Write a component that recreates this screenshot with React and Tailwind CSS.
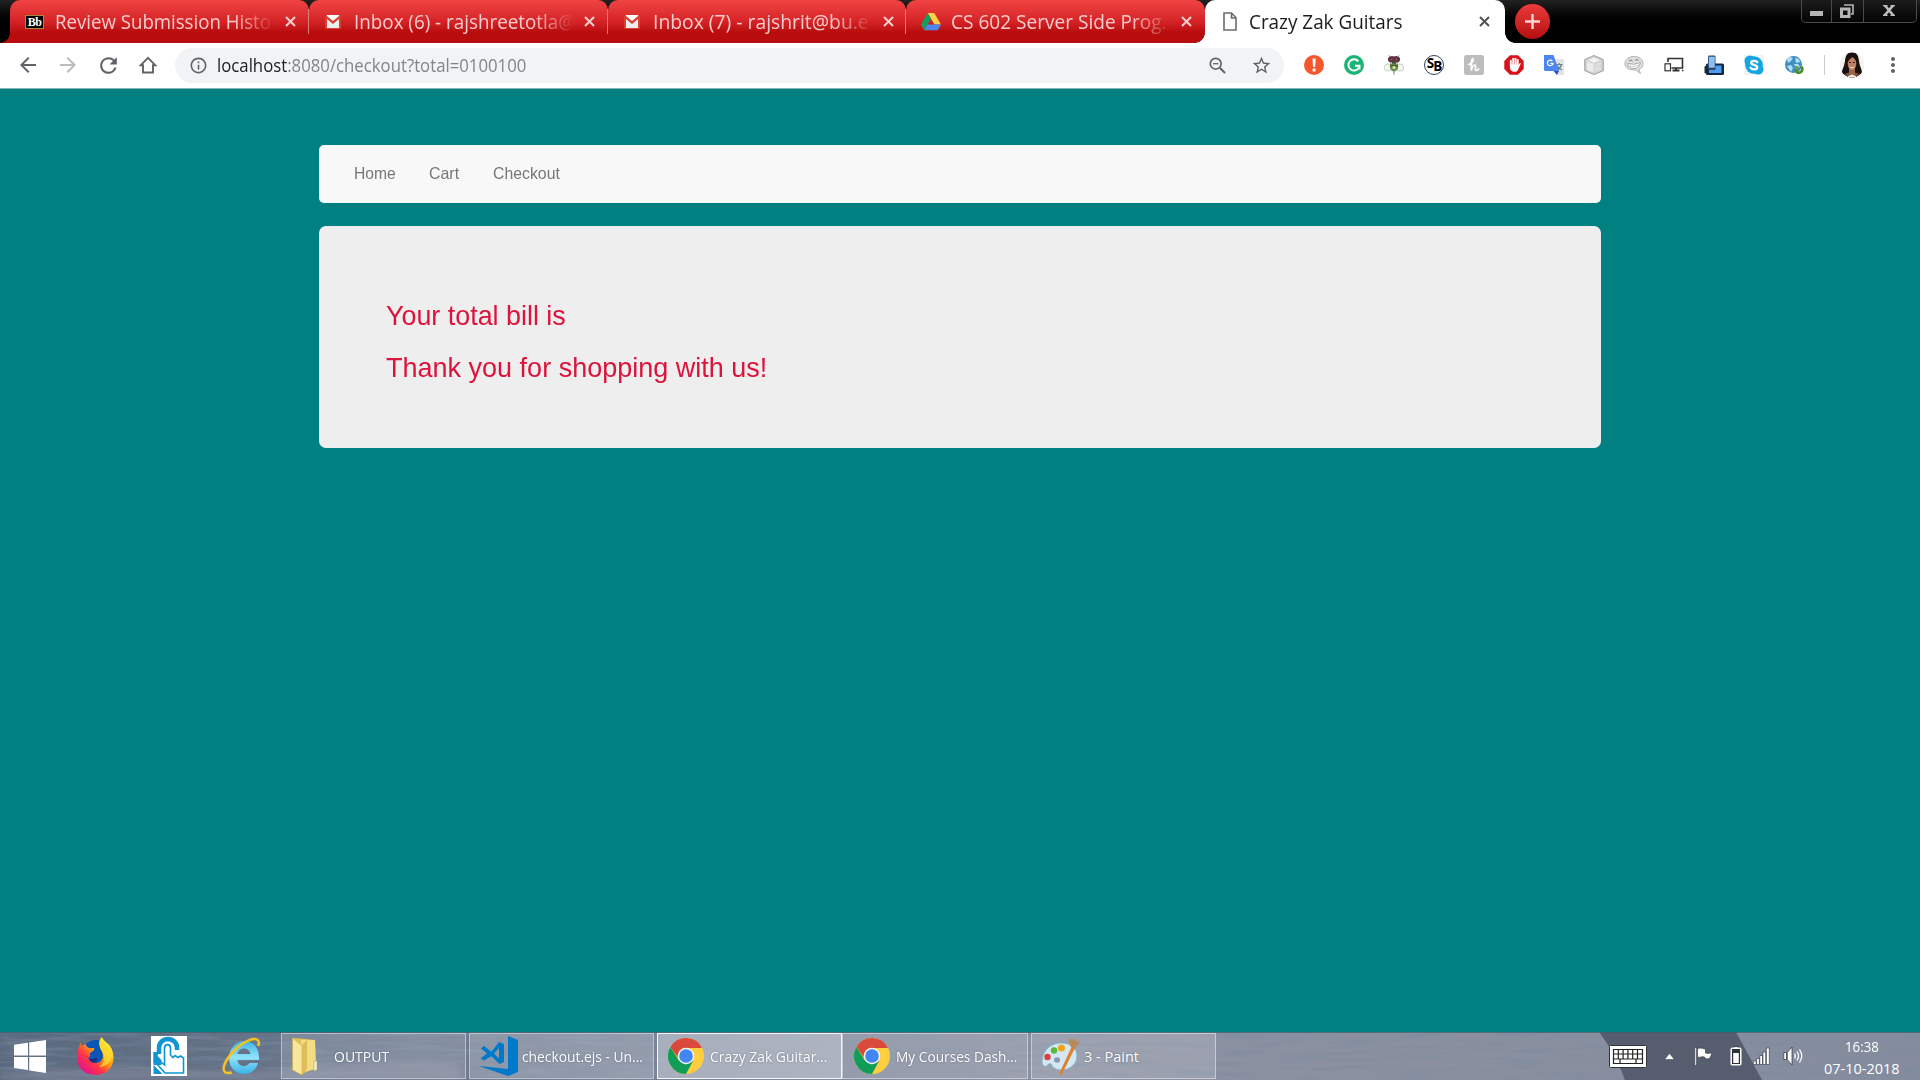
import { useLayoutEffect, useRef, useState } from "react";
import {
  MdArrowBack,
  MdArrowForward,
  MdRefresh,
  MdInfoOutline,
  MdStarBorder,
  MdZoomOut,
  MdMoreVert,
} from "react-icons/md";

/* A single line of text condensed or expanded to an exact width. */
function Fit({ w, className = "", children }) {
  const ref = useRef(null);
  const [scale, setScale] = useState(1);
  useLayoutEffect(() => {
    const natural = ref.current.offsetWidth;
    if (natural) setScale(w / natural);
  }, [w]);
  return (
    <span className="block shrink-0" style={{ width: w }}>
      <span
        ref={ref}
        className={`inline-block origin-left whitespace-nowrap ${className}`}
        style={{ transform: `scaleX(${scale})` }}
      >
        {children}
      </span>
    </span>
  );
}

function Cross({ className }) {
  return (
    <svg width="11" height="11" viewBox="0 0 11 11" className={className}>
      <path d="M1 1l9 9M10 1l-9 9" stroke="currentColor" strokeWidth="2" fill="none" />
    </svg>
  );
}

function BbIcon() {
  return (
    <span className="flex h-[14px] w-[19px] items-center justify-center border border-[#a5883c] bg-black font-['Liberation_Serif',serif] text-[12px] leading-none font-bold tracking-[-0.5px] text-white">
      Bb
    </span>
  );
}

function GmailIcon() {
  return (
    <svg width="18" height="16" viewBox="0 0 18 16">
      <rect x="1" y="1" width="16" height="14" rx="1" fill="#d9402f" />
      <path d="M3 1h12v1L9 7 3 2z" fill="#fff" />
      <path d="M3 5l6 5 6-5v9H3z" fill="#eee" />
    </svg>
  );
}

function DriveIcon() {
  return (
    <svg width="20" height="18" viewBox="0 0 20 18">
      <path d="M6.7 0h6.6L20 11.5h-6.6z" fill="#ffcf48" />
      <path d="M6.7 0L10 5.8 3.3 17.3 0 11.5z" fill="#11a05e" />
      <path d="M6.6 11.5H20l-3.3 5.8H3.3z" fill="#4b87ee" />
    </svg>
  );
}

function FileIcon() {
  return (
    <svg width="14" height="19" viewBox="0 0 14 19" fill="none" stroke="#6c6c6c" strokeWidth="1.6">
      <path d="M1 1h7.500L13 5.700V18H1z" />
      <path d="M8.500 1v5H13" />
    </svg>
  );
}

const tabs = [
  { icon: <BbIcon />, title: "Review Submission Histo", w: 216 },
  { icon: <GmailIcon />, title: "Inbox (6) - rajshreetotla@", w: 221 },
  { icon: <GmailIcon />, title: "Inbox (7) - rajshrit@bu.e", w: 216 },
  { icon: <DriveIcon />, title: "CS 602 Server Side Prog.", w: 216 },
];

function Tab({ icon, title, w, last }) {
  return (
    <div
      className={`relative flex h-[43px] w-[298.75px] shrink-0 items-center rounded-t-[10px] bg-linear-to-b from-[#f24343] via-[#d42326] via-50% to-[#b80c0d] to-75% ${last ? "rounded-br-[10px]" : ""}`}
    >
      <div className="flex w-[45px] justify-center pl-[4px]">{icon}</div>
      <div className="w-[223px] overflow-hidden mask-r-from-80% mask-r-to-99% text-[19.500px] leading-[30px] text-[#f8cccc]">
        <Fit w={w}>{title}</Fit>
      </div>
      <Cross className="ml-[7px] text-[#f6cfcf]" />
      {!last && <div className="absolute top-[9px] right-0 h-[25px] w-px bg-[#e07a7a]" />}
    </div>
  );
}

function TitleBar() {
  return (
    <div className="flex h-[43px] bg-linear-to-b from-[#222] to-black to-70%">
      <div className="flex w-[10px] items-end">
        <div className="size-[10px] bg-[radial-gradient(circle_at_0_0,transparent_9.500px,#b80c0d_10px)]" />
      </div>
      {tabs.map((t, i) => (
        <Tab key={t.title} {...t} last={i === tabs.length - 1} />
      ))}
      <div className="relative flex h-[43px] w-[300px] items-center rounded-t-[10px] bg-white">
        <div className="absolute bottom-0 -left-[10px] size-[10px] bg-[radial-gradient(circle_at_0_0,transparent_9.500px,#fff_10px)]" />
        <div className="absolute -right-[10px] bottom-0 size-[10px] bg-[radial-gradient(circle_at_100%_0,transparent_9.500px,#fff_10px)]" />
        <div className="flex w-[44px] justify-center pl-[6px]">
          <FileIcon />
        </div>
        <div className="w-[218px] text-[19.500px] leading-[30px] text-[#1c1c1c]">
          <Fit w={153}>Crazy Zak Guitars</Fit>
        </div>
        <Cross className="ml-[12px] text-[#4f5256]" />
      </div>
      <div className="mt-[3.500px] ml-[10px] flex size-[35px] items-center justify-center rounded-full bg-linear-to-b from-[#ec3a3b] to-[#b50b0d]">
        <svg width="15" height="15" viewBox="0 0 15 15">
          <path d="M7.500 0v15M0 7.500h15" stroke="#fbd5d5" strokeWidth="2.400" />
        </svg>
      </div>
      <div className="mr-[3px] ml-auto flex h-[23px] w-[116px] rounded-b-[5px] border border-t-0 border-[#4a4a4a] bg-linear-to-b from-[#1c1c1c] to-[#050505]">
        <div className="flex w-[30px] justify-center border-r border-[#4a4a4a] pt-[11px]">
          <div className="h-[4.500px] w-[13px] bg-[#b5b5b5]" />
        </div>
        <div className="flex w-[32px] justify-center border-r border-[#4a4a4a] pt-[4px] pr-[2px]">
          <svg width="14" height="14" viewBox="0 0 14 14" fill="none" stroke="#b5b5b5">
            <path d="M4 1h9v9h-2" strokeWidth="1.600" />
            <rect x="1.500" y="5" width="7.500" height="7.500" strokeWidth="3" />
          </svg>
        </div>
        <div className="flex flex-1 justify-center pt-[5px] pr-[3px]">
          <svg width="12" height="11" viewBox="0 0 12 11">
            <path d="M1.500 0l9 10.500M10.500 0l-9 10.500" stroke="#bdbdbd" strokeWidth="2.600" />
            <path d="M0 .7h4.500M7.500.7H12M0 10.300h4.500M7.500 10.300H12" stroke="#bdbdbd" strokeWidth="1.200" />
          </svg>
        </div>
      </div>
    </div>
  );
}

const svg20 = { width: 20, height: 20, viewBox: "0 0 20 20" };

const extensions = [
  <svg {...svg20}>
    <circle cx="10" cy="10" r="10" fill="#f4572b" />
    <path d="M8.500 3.500h3.200l-.5 8.500H9z" fill="#fff" />
    <circle cx="10.100" cy="15" r="1.700" fill="#fff" />
  </svg>,
  <svg {...svg20}>
    <circle cx="10" cy="10" r="10" fill="#1cb476" />
    <path d="M14.300 6.300A5.600 5.600 0 1 0 15 12.500" fill="none" stroke="#fff" strokeWidth="1.900" />
    <path d="M11 10.700h4.500v3.800" fill="none" stroke="#fff" strokeWidth="1.900" />
  </svg>,
  <svg {...svg20}>
    <ellipse cx="4" cy="12.500" rx="3.800" ry="3.600" fill="#f3f5ee" stroke="#c3c7ba" strokeWidth=".8" />
    <ellipse cx="16" cy="12.500" rx="3.800" ry="3.600" fill="#f3f5ee" stroke="#c3c7ba" strokeWidth=".8" />
    <path d="M6 3L5 0M14 3l1-3" stroke="#999" strokeWidth=".8" />
    <path d="M4 3q3-3 6-1.500Q13 0 16 3q.5 3-2 4.500H6Q3.500 6 4 3z" fill="#5e2f42" />
    <path d="M6.500 3.500h2v2h-2zM11.500 3.500h2v2h-2z" fill="#93485c" />
    <path d="M8 6h4v3H8z" fill="#3e4a3a" />
    <path d="M6 8.500h8v5q-1.500 3-4 3t-4-3z" fill="#6f8e4b" />
    <path d="M6 11.500q4-2.500 8 0" stroke="#3d5230" strokeWidth="1.200" fill="none" />
    <circle cx="10" cy="12.500" r="1.500" fill="#dbe6a8" />
    <path d="M9 16h2.200l-.6 4H9.600z" fill="#a9b0b0" />
  </svg>,
  <span className="flex size-[20px] items-center justify-center rounded-full border border-[#32435f] bg-white text-[13.500px] leading-none font-bold tracking-[-1px] text-black">
    <span className="-mt-[3px]">S</span>
    <span className="mt-[3px]">B</span>
  </span>,
  <svg {...svg20}>
    <rect width="20" height="20" rx="2.500" fill="#bdbdbd" />
    <path
      d="M5 9.500c3.500-1.500 5-4.500 4-5.800C7.700 3.100 7.200 8 7.300 15.500c.7-3.300 1.900-5.300 3.400-5.500 2.400.1-.8 5.500 1.700 5.500 1 0 1.800-.8 2.300-1.700"
      fill="none"
      stroke="#fff"
      strokeWidth="1.700"
      strokeLinecap="round"
    />
  </svg>,
  <svg {...svg20}>
    <path d="M6 .3h8L19.700 6v8L14 19.700H6L.3 14V6z" fill="#d8121b" />
    <path
      d="M6.800 11V5.800M9.200 10V3.600M11.500 10V3.600M13.700 11V5"
      stroke="#fff"
      strokeWidth="1.900"
      strokeLinecap="round"
    />
    <path d="M5.900 9.500h8.800l1-1.200c.7-.5 1.200 0 .9.800l-2.400 5.300c-.7 1.700-1.600 2.300-3.700 2.300-3 0-4.600-1.700-4.600-4.500z" fill="#fff" />
  </svg>,
  <svg {...svg20}>
    <path d="M9 4h11v16h-6z" fill="#e2e4e8" />
    <path d="M12 9.500h6.500M15.200 8v1.500M17.500 9.500q-1 4-4.500 5.500M13.500 10.500q1.500 3.500 4.500 4.500" stroke="#6d7b8a" strokeWidth="1.100" fill="none" />
    <path d="M0 0h9.500l5.500 16H1.500Q0 16 0 14.500z" fill="#4a86ee" />
    <path d="M9.500 16H15l-2 4z" fill="#2a54b5" />
    <path d="M8.300 6A2.800 2.800 0 1 0 9 8.300H6.500" fill="none" stroke="#fff" strokeWidth="1.300" />
  </svg>,
  <svg {...svg20}>
    <path d="M10 .5l9.300 4v11.200L10 19.600.7 15.700V4.500z" fill="#d0d0d0" stroke="#a3a3a3" />
    <path d="M10 2.500l6 2.700-6 2.600-6-2.600z" fill="#f3f3f3" />
    <path d="M3 6.500L9.500 9v8.500L3 14.800z" fill="#ebebeb" />
    <path d="M10.500 9L17 6.500v8.300l-6.500 2.700z" fill="#dcdcdc" />
  </svg>,
  <svg {...svg20}>
    <path d="M10 1.500c5 0 9 2.800 9 7 0 3-1.500 5-4 6l1.500 4-5-3.500C5 15.200 1 13 1 8.500c0-4.200 4-7 9-7z" fill="#e0e0e0" stroke="#b2b2b2" />
    <path d="M3.500 8.500q7 2 13-1-1 6-6.500 6-5.500 0-6.500-5z" fill="#fff" stroke="#9a9a9a" strokeWidth=".8" />
    <path d="M4 10.800q6 2 11.500-1" stroke="#b5b5b5" strokeWidth=".7" fill="none" />
    <path d="M5 6q2-2 3.500 0M11 5.500q2-2 3.500 0" stroke="#777" fill="none" />
  </svg>,
  <svg {...svg20} fill="none" stroke="#333">
    <path d="M4 7V3.500h14.500V13H7.500" strokeWidth="1.600" />
    <rect x="1" y="8.800" width="5.500" height="7" strokeWidth="1.200" />
    <path d="M12 13v2.500M8.500 15.500h7" strokeWidth="2" />
    <path d="M18 15.500h1.500" strokeWidth="1.500" />
  </svg>,
  <svg {...svg20}>
    <rect x="0.500" y="11" width="5" height="7.500" rx="1" fill="#19293d" />
    <rect x="2" y="8.500" width="18" height="11.500" rx="1.500" fill="#14273f" />
    <rect x="5" y="10.500" width="12.500" height="7.500" fill="#4e9cf2" />
    <rect x="4" y="0.500" width="7.500" height="14.500" rx="1.200" fill="#2b4566" />
    <rect x="4.800" y="1.700" width="6" height="11" fill="#8dbdf2" />
  </svg>,
  <svg {...svg20}>
    <rect x="0" y="0" width="20" height="20" fill="#f0f4f7" />
    <circle cx="10" cy="10" r="8.800" fill="#14a5e3" />
    <circle cx="6" cy="6" r="5.500" fill="#14a5e3" />
    <circle cx="14.200" cy="14.200" r="5.300" fill="#14a5e3" />
    <path
      d="M13.300 7.300C12.600 5.700 7.300 5 7.200 7.700c0 2.700 6 1.500 6 4.500 0 2.800-5.500 2.600-6.600.5"
      fill="none"
      stroke="#fff"
      strokeWidth="2.300"
      strokeLinecap="round"
    />
  </svg>,
  <svg {...svg20}>
    <circle cx="9.500" cy="9.500" r="8.500" fill="#3d8fc6" />
    <path d="M3 4l3-2 3 1-2 3-3 2zM11 3l4 1 1 3-4 1zM3 11l4-1 2 3-2 4zM10 9l4 0 2 3-4 1z" fill="#b5dff2" />
    <path d="M11.500 14.500q1 4 4.500 3 3.500-1.500 1.500-6" fill="none" stroke="#4f8f1f" strokeWidth="2.800" />
    <path d="M10.500 11h4l-2 4z" fill="#65a82c" />
  </svg>,
];

function Toolbar() {
  return (
    <div className="flex h-[46px] items-center border-b border-[#86b4b5] bg-white pb-px pl-2">
      {[
        <MdArrowBack size={24} className="text-[#5f6368]" />,
        <MdArrowForward size={24} className="text-[#babcbe]" />,
        <MdRefresh size={25} className="text-[#5f6368]" />,
        <svg width="18" height="18" viewBox="0 0 18 18" fill="none" stroke="#5f6368" strokeWidth="1.900">
          <path d="M1.800 9.200L9 1.900l7.200 7.300H14v7.300H4V9.200z" />
        </svg>,
      ].map((icon, i) => (
        <div key={i} className="flex w-10 justify-center">
          {icon}
        </div>
      ))}
      <div className="mt-px ml-[7px] flex h-[35px] w-[1109px] items-center rounded-full bg-[#f1f3f4] pb-px pl-[13.500px] text-[#5f6368]">
        <MdInfoOutline size={19} className="mt-px" />
        <div className="ml-[9.500px] text-[18px] leading-[30px] text-[#80868b]">
          <Fit w={309}>
            <span className="text-[#202124]">localhost</span>:8080/checkout?total=0100100
          </Fit>
        </div>
        <svg width="17" height="17" viewBox="0 0 17 17" fill="none" stroke="#5f6368" className="mr-[2px] ml-auto">
          <circle cx="6.700" cy="6.700" r="5.400" strokeWidth="1.700" />
          <path d="M10.800 10.800l5.200 5.200" strokeWidth="2" />
          <path d="M4 6.700h5.400" strokeWidth="1.300" />
        </svg>
        <MdStarBorder size={21} className="mt-px mr-[12.500px] ml-[22.500px]" />
      </div>
      <div className="ml-[10px] flex">
        {extensions.map((icon, i) => (
          <div key={i} className="flex w-10 justify-center">
            {icon}
          </div>
        ))}
      </div>
      <div className="ml-[10px] h-5 w-px bg-[#c8cacc]" />
      <svg width="24" height="26" viewBox="0 0 24 26" className="ml-[15px]">
        <defs>
          <clipPath id="face">
            <circle cx="12" cy="13" r="12.500" />
          </clipPath>
        </defs>
        <g clipPath="url(#face)">
          <rect width="24" height="26" fill="#f5f1ee" />
          <path d="M12 0c5 0 6.500 4 7 9s3 8 3 12-3 5-5 5H6c-3 0-5-2-4.500-5S4.500 14 5 9s2-9 7-9z" fill="#1b1110" />
          <path d="M3 24q4-4 9-4t9 4v3H3z" fill="#7b5040" />
          <path d="M9 17h6v5l-3 2-3-2z" fill="#9b6347" />
          <ellipse cx="12" cy="11.500" rx="4.300" ry="6.800" fill="#bd8264" />
          <path d="M7.500 10q1-6 5-6.500 3.500.5 4.300 6.500-2-3.500-4.300-5-3 2-5 5z" fill="#1b1110" />
          <path d="M9.700 15q2.300 1.800 4.600 0" stroke="#f2d9cc" strokeWidth="1" fill="none" />
          <path d="M9 10.500h2M13 10.500h2" stroke="#3a211b" strokeWidth="1" />
          <path d="M8 24l4-1.500 4 1.500v2H8z" fill="#f0e5de" />
        </g>
      </svg>
      <MdMoreVert size={24} className="ml-[17px] text-[#5f6368]" />
    </div>
  );
}

function Page() {
  return (
    <div className="h-[943px] bg-[#008080] pt-[56px] font-['Liberation_Sans',Arial,sans-serif]">
      <div className="ml-[319px] flex h-[58px] w-[1282px] items-center rounded-[5px] bg-[#f8f8f8] pl-[35px] text-[17px] leading-[24px] text-[#777]">
        <Fit w={41.5}>Home</Fit>
        <div className="ml-[33.500px]">
          <Fit w={30}>Cart</Fit>
        </div>
        <div className="ml-[33.500px]">
          <Fit w={67}>Checkout</Fit>
        </div>
      </div>
      <div className="mt-[23px] ml-[319px] flex h-[222px] w-[1282px] flex-col gap-[20px] rounded-[7px] bg-[#eee] pt-[74px] pl-[67px] text-[28px] leading-[32px] text-[#dc143c]">
        <Fit w={179.5}>Your total bill is</Fit>
        <Fit w={381}>Thank you for shopping with us!</Fit>
      </div>
    </div>
  );
}

function ChromeLogo() {
  return (
    <svg width="36" height="36" viewBox="0 0 36 36">
      <circle cx="18" cy="18" r="18" fill="#ffcd40" />
      <path d="M2.400 9A18 18 0 0 0 18 36l7.300-13.500L18 26.500 10.500 22z" fill="#0f9d58" />
      <path d="M2.400 9A18 18 0 0 1 34 9.900H18a8 8 0 0 0-7.500 5.600L10.200 20z" fill="#d94a3d" />
      <circle cx="18" cy="18" r="8.300" fill="#f1f1f1" />
      <circle cx="18" cy="18" r="6.800" fill="#4285f4" />
    </svg>
  );
}

function VsCodeLogo() {
  return (
    <svg width="39" height="40" viewBox="0 0 39 40">
      <path d="M29 0l10 4v32l-10 4L0 30l29 3z" fill="#0179cb" />
      <path
        fillRule="evenodd"
        d="M2 12.500L5 10l7.500 5.800L20 6l5 2v18l-4.500 2-8-7.800L5 24.500l-3.500-2L8 17.500zM20 12l-5 5.500 5 5z"
        fill="#0179cb"
      />
    </svg>
  );
}

function FolderLogo() {
  return (
    <svg width="26" height="39" viewBox="0 0 26 39">
      <path d="M1 1l13 1 9 1 1 28-14 6z" fill="#e2c25c" />
      <path d="M9 3l14 0 1 29-14 3z" fill="#f3dc83" />
      <path d="M0.500 1L10 8.500V38L0.500 33z" fill="#f7e69c" stroke="#cfab44" strokeWidth=".6" />
      <path d="M10 8l5-5v29l-5 6z" fill="#dfbd59" />
      <path d="M22 24h3v9l-3 1z" fill="#eef0e0" stroke="#b89a45" strokeWidth=".5" />
    </svg>
  );
}

function PaintLogo() {
  return (
    <svg width="39" height="38" viewBox="0 0 39 38">
      <path
        d="M1 25C1 12 12 5 22 6c9 .5 14 6 14 13 0 8-7 14-15 14-6 0-9-2-11-6-2-1-4 1-5 3-3-1-4-3-4-5z"
        fill="#d2e7f3"
        stroke="#86b1cb"
      />
      <ellipse cx="16" cy="23" rx="3" ry="2.800" fill="#8b98ab" />
      <circle cx="6.500" cy="20" r="3.200" fill="#d8423b" />
      <circle cx="13" cy="13.500" r="3.200" fill="#5eb63c" />
      <circle cx="20.500" cy="11" r="3.600" fill="#f0a51f" />
      <path d="M31 9l3 2-13 26-2 1 0-3z" fill="#df812c" />
      <path d="M29 9l5 3 5-8-4 1-1-4-2 2-4-2z" fill="#b98a57" />
    </svg>
  );
}

function FirefoxLogo() {
  return (
    <svg width="37" height="38" viewBox="0 0 37 38">
      <defs>
        <linearGradient id="ffx" x1="0.900" y1="0.100" x2="0.200" y2="0.900">
          <stop offset="0.100" stopColor="#fff13f" />
          <stop offset="0.450" stopColor="#ff980e" />
          <stop offset="0.700" stopColor="#ff3647" />
          <stop offset="1" stopColor="#e31587" />
        </linearGradient>
      </defs>
      <circle cx="19" cy="17" r="14" fill="#0b54b8" />
      <path
        d="M4 5c0 2 0 3 1 4l4-2c0 2 1 3 3 4l5 0c1 2-1 3-4 5 0 2 1 4-2 5 2 5 9 7 13 3 3-3 2-8 0-11-2-5-3-9 1-13 1 4 5 5 8 9 7 10 4 28-14 29C6 38 0 29 0 21 0 15 1 11 4 5z"
        fill="url(#ffx)"
      />
      <path d="M25 0c-4 5-3 9 0 14 4 8 2 13-3 16 8 0 14-7 13-14C34 8 26 6 25 0z" fill="#ffd92e" opacity=".8" />
      <path d="M12 22c3 1 5-2 9 0-2 4-7 5-9 0z" fill="#1b2d7c" />
    </svg>
  );
}

function TouchLogo() {
  return (
    <svg width="36" height="40" viewBox="0 0 36 40">
      <rect width="36" height="40" fill="#fff" />
      <path d="M8 18V11.500A9 8.500 0 0 1 26 11.500V14" fill="none" stroke="#1095d2" strokeWidth="4.500" />
      <path
        d="M13.500 12c0-4.500 6-4.500 6 0v7l2.500 2.500 2-2 3 2 2.500-1.500 3 2v15H14l-8-9c1-3 4-2.500 7.500 1z"
        fill="#fff"
        stroke="#1095d2"
        strokeWidth="1.600"
      />
      <path d="M2.500 16l8 8v5H2.500zM2.500 29l9 9h-9z" fill="#1095d2" />
      <path d="M2.500 16h6l-6 12z" fill="#1095d2" />
    </svg>
  );
}

function IeLogo() {
  return (
    <svg width="38" height="38" viewBox="0 0 38 38">
      <defs>
        <linearGradient id="ie" x1="0" y1="0" x2="0" y2="1">
          <stop offset="0" stopColor="#3fb4e6" />
          <stop offset="0.500" stopColor="#8fe3fb" />
          <stop offset="1" stopColor="#38b3e4" />
        </linearGradient>
      </defs>
      <path
        fillRule="evenodd"
        d="M22 4c9 0 15 6 15 17v2H15.500c.5 7 9 8 12 3h8.500c-2 7-7 11-14 11-9 0-15-7-15-16S14 4 22 4zM15.500 17h13c-1-7.500-12-7.500-13 0z"
        fill="url(#ie)"
      />
      <path
        d="M36 9C38.500 4 35 .5 29 2.500 17 6.500 4 20 1.800 30c-1 5 2 7 8 5.500"
        fill="none"
        stroke="#f6c21c"
        strokeWidth="2.500"
      />
    </svg>
  );
}

const windows = [
  { icon: <FolderLogo />, label: "OUTPUT", w: 55, box: "w-[185px] bg-white/15 border-white/45", ic: "ml-[10px]", tx: "ml-[16px]" },
  { icon: <VsCodeLogo />, label: "checkout.ejs - Un...", w: 121, box: "ml-[3px] w-[185px] bg-white/20 border-white/40", ic: "ml-[9px]", tx: "ml-[4px]" },
  { icon: <ChromeLogo />, label: "Crazy Zak Guitar...", w: 117, box: "ml-[3px] w-[185px] bg-white/35 border-white/90", ic: "ml-[10px]", tx: "ml-[6px]" },
  { icon: <ChromeLogo />, label: "My Courses Dash...", w: 121, box: "w-[186px] bg-white/15 border-white/45", ic: "ml-[11px]", tx: "ml-[6px]" },
  { icon: <PaintLogo />, label: "3 - Paint", w: 55, box: "ml-[3px] w-[185px] bg-white/15 border-white/45", ic: "ml-[9px]", tx: "ml-[4px]" },
];

function Water() {
  return (
    <svg className="absolute inset-0" width="1920" height="48" viewBox="0 0 1920 48">
      <defs>
        <linearGradient id="sea" x1="0" x2="1" y1="0" y2="0">
          <stop offset="0" stopColor="#5a697d" />
          <stop offset="0.200" stopColor="#6b788d" />
          <stop offset="0.400" stopColor="#7f889c" />
          <stop offset="0.550" stopColor="#8d92a3" />
          <stop offset="0.750" stopColor="#8b909f" />
          <stop offset="1" stopColor="#848c9e" />
        </linearGradient>
        <filter id="ripple" x="0" y="0" width="1" height="1">
          <feTurbulence type="fractalNoise" baseFrequency="0.018 0.200" numOctaves="4" seed="7" />
          <feColorMatrix values="0 0 0 0 0.200  0 0 0 0 0.260  0 0 0 0 0.350  3 0 0 0 -1.300" />
        </filter>
        <filter id="foam" x="0" y="-0.500" width="1" height="2">
          <feGaussianBlur stdDeviation="3" />
        </filter>
      </defs>
      <rect width="1920" height="48" fill="url(#sea)" />
      <path d="M0 42q80-8 170-4t180-6 110 2v14H0z" fill="#8b8ca0" opacity=".55" filter="url(#foam)" />
      <rect width="1920" height="48" filter="url(#ripple)" opacity=".55" />
      <path d="M1599 0h137l26 48h-137c-6-16-14-32-26-48z" fill="#505869" opacity=".9" />
      <rect width="1920" height="1" fill="#3d5c6c" opacity=".7" />
    </svg>
  );
}

function Taskbar() {
  return (
    <div className="relative h-[48px] overflow-hidden text-white">
      <Water />
      <div className="relative flex h-full items-center">
        <svg width="32" height="33" viewBox="0 0 32 33" className="ml-[14px]" fill="#fff">
          <path d="M0 4.700L14 2.800V15.600H0zM15.200 2.600L32 0v15.600H15.200zM0 17h14v12.900L0 28zM15.200 17H32v16l-16.800-2.600z" />
        </svg>
        <div className="ml-[31px]"><FirefoxLogo /></div>
        <div className="ml-[37px]"><TouchLogo /></div>
        <div className="ml-[35px]"><IeLogo /></div>
        <div className="ml-[21px] flex">
          {windows.map((win) => (
            <div key={win.label} className={`flex h-[46px] shrink-0 items-center border ${win.box}`}>
              <div className={`shrink-0 ${win.ic}`}>{win.icon}</div>
              <div className={`pt-px text-[14.500px] leading-[20px] text-shadow-[0_0_2px_rgb(60_70_90/0.6)] ${win.tx}`}>
                <Fit w={win.w}>{win.label}</Fit>
              </div>
            </div>
          ))}
        </div>
        <div className="mr-[20px] ml-auto flex items-center">
          <svg width="38" height="23" viewBox="0 0 38 23">
            <rect x="0.500" y="0.500" width="37" height="22" rx="1" fill="#fff" stroke="#30343c" />
            <g fill="none" stroke="#222" strokeWidth="1.200">
              <path d="M4.500 4.500h29v14h-29zM4.500 9h29M4.500 14h29M9.300 4.500V14M14.100 4.500V14M18.900 4.500V14M23.700 4.500V14M28.500 4.500V14M11 14v4.500M27 14v4.500" />
            </g>
          </svg>
          <svg width="11" height="7" viewBox="0 0 11 7" className="ml-[17px]">
            <path d="M5.500.5L10.500 6.500H.5z" fill="#fff" stroke="#3d4452" strokeWidth=".6" />
          </svg>
          <svg width="19" height="19" viewBox="0 0 19 19" className="ml-[19px]">
            <path d="M.8.5h1.800v18H.8z" fill="#fff" stroke="#2b303a" strokeWidth=".6" />
            <path d="M3.500 2c3-2 5 0 8 0v4c2 1 4 0 6.500 0l-2 5c-3 2-5 0-5.500-1-3-1-4 1-7 0z" fill="#fff" stroke="#2b303a" strokeWidth=".6" />
          </svg>
          <svg width="12" height="20" viewBox="0 0 12 20" className="ml-[17px]">
            <path d="M3.500 2V.7h5V2" fill="#fff" stroke="#2b303a" />
            <rect x="1.200" y="2.200" width="9.600" height="16.600" rx="1" fill="#2b303a" stroke="#fff" strokeWidth="1.500" />
            <rect x="3.200" y="7" width="5.600" height="10" fill="#fff" />
          </svg>
          <svg width="17" height="18" viewBox="0 0 17 18" className="ml-[11px]" fill="#fff" stroke="#2b303a" strokeWidth=".6">
            <path d="M.4 14h2.700v3.500H.4zM3.600 11.500h2.700v6H3.600zM6.800 8.500h2.700v9H6.800zM10 5h2.700v12.500H10zM13.400 1h2.900v16.500h-2.900z" />
          </svg>
          <svg width="20" height="20" viewBox="0 0 20 20" className="ml-[13px]" fill="none">
            <path d="M.8 6.500h2.700v7H.8zM4.300 6.500L9 1v18l-4.700-5.500z" fill="#fff" stroke="#2b303a" strokeWidth=".7" />
            <path d="M11.500 7.500q1.500 2.500 0 5M14 5.500q3 4.500 0 9M16.500 3.500q4.500 6.500 0 13" stroke="#fff" strokeWidth="1.300" />
          </svg>
          <div className="ml-[21px] flex w-[76px] flex-col items-center pt-[3px] text-[14.500px] leading-[22px]">
            <Fit w={34}>16:38</Fit>
            <Fit w={76}>07-10-2018</Fit>
          </div>
        </div>
      </div>
    </div>
  );
}

export default function App() {
  return (
    <div className="flex h-[1080px] w-[1920px] flex-col overflow-hidden font-['Open_Sans','Noto_Sans',sans-serif]">
      <TitleBar />
      <Toolbar />
      <Page />
      <Taskbar />
    </div>
  );
}
